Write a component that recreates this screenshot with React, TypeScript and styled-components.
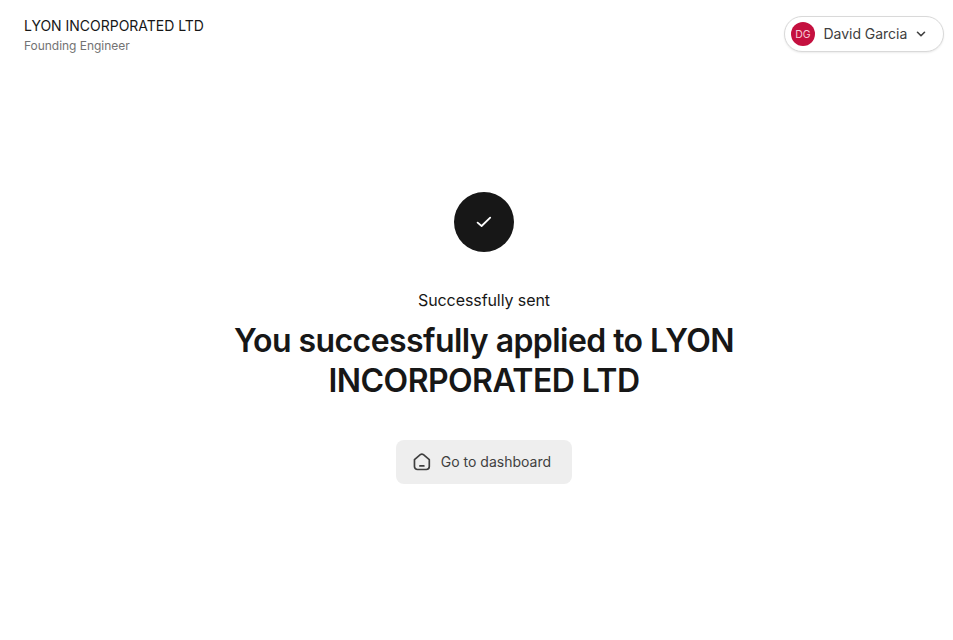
import React from "react";
import styled, { createGlobalStyle } from "styled-components";

const Global = createGlobalStyle`
  html, body { margin: 0; padding: 0; background: #fff; }
  body { font-family: Inter, "Liberation Sans", sans-serif; color: #171717; }
`;
const Page = styled.div`
  width: 953px;
  height: 640px;
  display: flex;
  flex-direction: column;
  overflow: hidden;
`;
const Header = styled.header`
  display: flex;
  justify-content: space-between;
  align-items: flex-start;
  padding: 16px 9px 0 24px;
`;
const Company = styled.div`
  display: flex;
  flex-direction: column;
  gap: 2px;
`;
const CompanyName = styled.div`
  font-size: 14px;
  line-height: 20px;
  letter-spacing: -0.02px;
  color: #171717;
`;
const Role = styled.div`
  font-size: 12px;
  line-height: 16px;
  color: #737373;
  letter-spacing: -0.03px;
`;
const UserPill = styled.button`
  display: flex;
  align-items: center;
  width: 160px;
  height: 36px;
  box-sizing: border-box;
  padding: 0 15px 0 6px;
  background: #fff;
  border: 1px solid #d9d9d9;
  border-radius: 18px;
  box-shadow: 0 1px 2px rgba(0, 0, 0, 0.08);
  font-family: inherit;
  cursor: pointer;
`;
const Avatar = styled.span`
  width: 24px;
  height: 24px;
  border-radius: 50%;
  background: #c4103f;
  color: #f6ccd8;
  font-size: 10.5px;
  display: flex;
  align-items: center;
  justify-content: center;
  flex-shrink: 0;
`;
const UserName = styled.span`
  margin: 0 0 2px 8.5px;
  font-size: 14px;
  letter-spacing: -0.03px;
  color: #404040;
  flex: 1;
  text-align: left;
  white-space: nowrap;
`;
const Main = styled.main`
  display: flex;
  flex-direction: column;
  align-items: center;
  padding: 138px 0 0 15px;
`;
const CheckCircle = styled.div`
  width: 60px;
  height: 60px;
  border-radius: 50%;
  background: #171717;
  display: flex;
  align-items: center;
  justify-content: center;
  color: #fff;
`;
const Eyebrow = styled.div`
  margin-top: 37px;
  font-size: 16px;
  line-height: 22px;
  letter-spacing: -0.08px;
  color: #171717;
`;
const Title = styled.h1`
  margin: 10px 0 0;
  width: 560px;
  text-align: center;
  font-size: 32px;
  line-height: 40px;
  font-weight: 600;
  letter-spacing: -0.56px;
  color: #171717;
`;
const DashboardButton = styled.button`
  margin-top: 39px;
  width: 176px;
  height: 44px;
  box-sizing: border-box;
  padding: 0 21px 0 16px;
  display: flex;
  align-items: center;
  gap: 9px;
  background: #eeeeee;
  border: none;
  border-radius: 8px;
  font-family: inherit;
  font-size: 14px;
  color: #404040;
  white-space: nowrap;
  cursor: pointer;
`;
const ButtonLabel = styled.span`
  margin-bottom: 2px;
`;

export default function App() {
  return (
    <Page>
      <Global />
      <Header>
        <Company>
          <CompanyName>LYON INCORPORATED LTD</CompanyName>
          <Role>Founding Engineer</Role>
        </Company>
        <UserPill>
          <Avatar>DG</Avatar>
          <UserName>David Garcia</UserName>
          <svg width="14" height="14" viewBox="0 0 24 24" fill="none" stroke="#404040" strokeWidth="2.8" strokeLinecap="round" strokeLinejoin="round">
            <path d="M6 9l6 6 6-6" />
          </svg>
        </UserPill>
      </Header>
      <Main>
        <CheckCircle>
          <svg width="16" height="16" viewBox="0 0 16 16" fill="none" stroke="#fff" strokeWidth="1.8" strokeLinecap="round" strokeLinejoin="round">
            <path d="M1.6 8.6l4 3.4 8.6-8.4" />
          </svg>
        </CheckCircle>
        <Eyebrow>Successfully sent</Eyebrow>
        <Title>You successfully applied to LYON INCORPORATED LTD</Title>
        <DashboardButton>
          <svg width="20" height="20" viewBox="0 0 20 20" fill="none" stroke="#3f3f3f" strokeWidth="1.7" strokeLinecap="round" strokeLinejoin="round">
            <path d="M2.5 7.6L8.4 2.6a2.5 2.5 0 0 1 3.2 0L17.5 7.6v7a3 3 0 0 1-3 3h-9a3 3 0 0 1-3-3z" />
            <path d="M8 14h4" />
          </svg>
          <ButtonLabel>Go to dashboard</ButtonLabel>
        </DashboardButton>
      </Main>
    </Page>
  );
}
